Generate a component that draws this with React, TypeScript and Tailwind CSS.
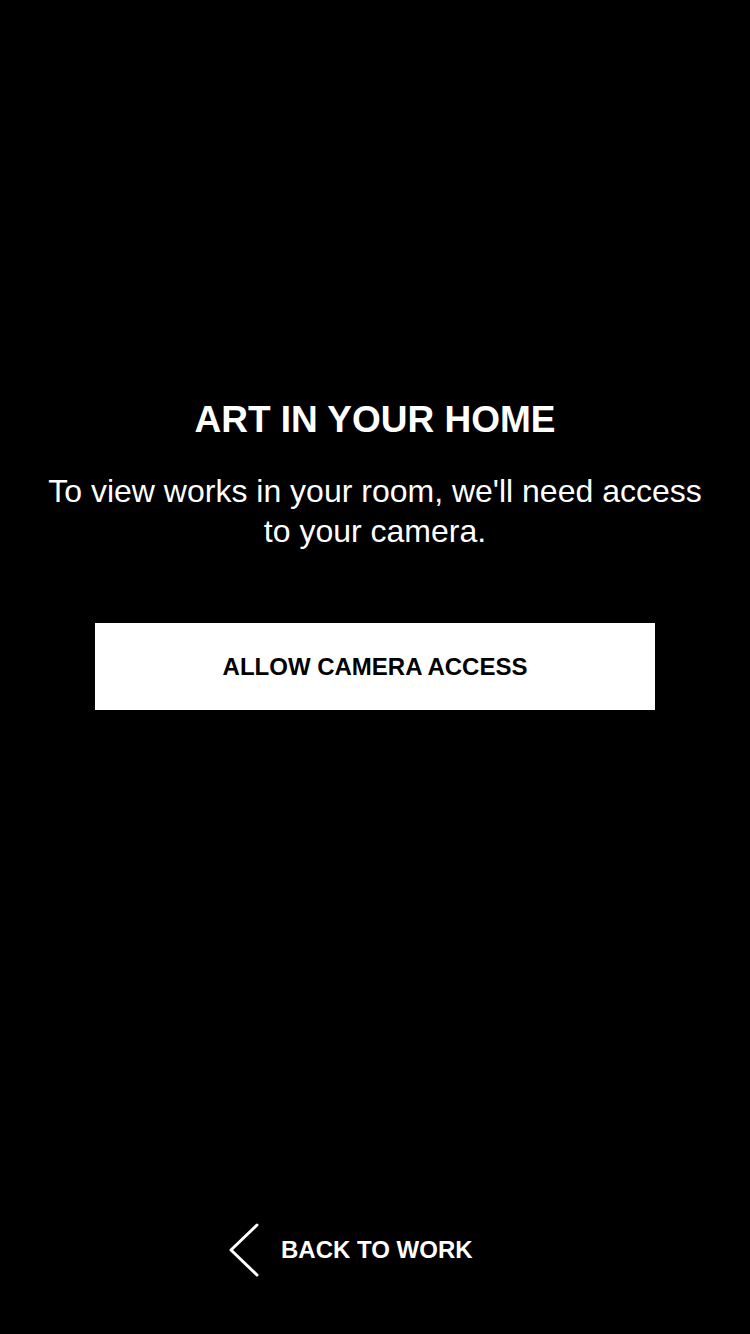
import React from 'react';

const font = { fontFamily: '"Liberation Sans", Arial, sans-serif' };

const ChevronLeft: React.FC = () => (
  <svg width="30" height="54" viewBox="0 0 30 54" fill="none" className="shrink-0">
    <path d="M28 2 L2 27 L28 52" stroke="white" strokeWidth="3" strokeLinecap="round" strokeLinejoin="round" />
  </svg>
);

const App: React.FC = () => (
  <div className="w-[750px] h-[1334px] bg-black text-white flex flex-col" style={font}>
    <div className="flex-1 flex flex-col items-center pt-[398px]">
      <h1 className="text-[37px] leading-[44px] font-bold">ART IN YOUR HOME</h1>
      <p className="mt-[29px] text-[32px] leading-[40px] text-center">
        To view works in your room, we'll need access
        <br />
        to your camera.
      </p>
      <button className="mt-[72px] w-[560px] h-[87px] bg-white text-black text-[24px] font-bold">
        ALLOW CAMERA ACCESS
      </button>
    </div>
    <div className="flex items-center gap-[22px] pl-[229px] pb-[57px]">
      <ChevronLeft />
      <span className="text-[24px] font-bold">BACK TO WORK</span>
    </div>
  </div>
);

export default App;
